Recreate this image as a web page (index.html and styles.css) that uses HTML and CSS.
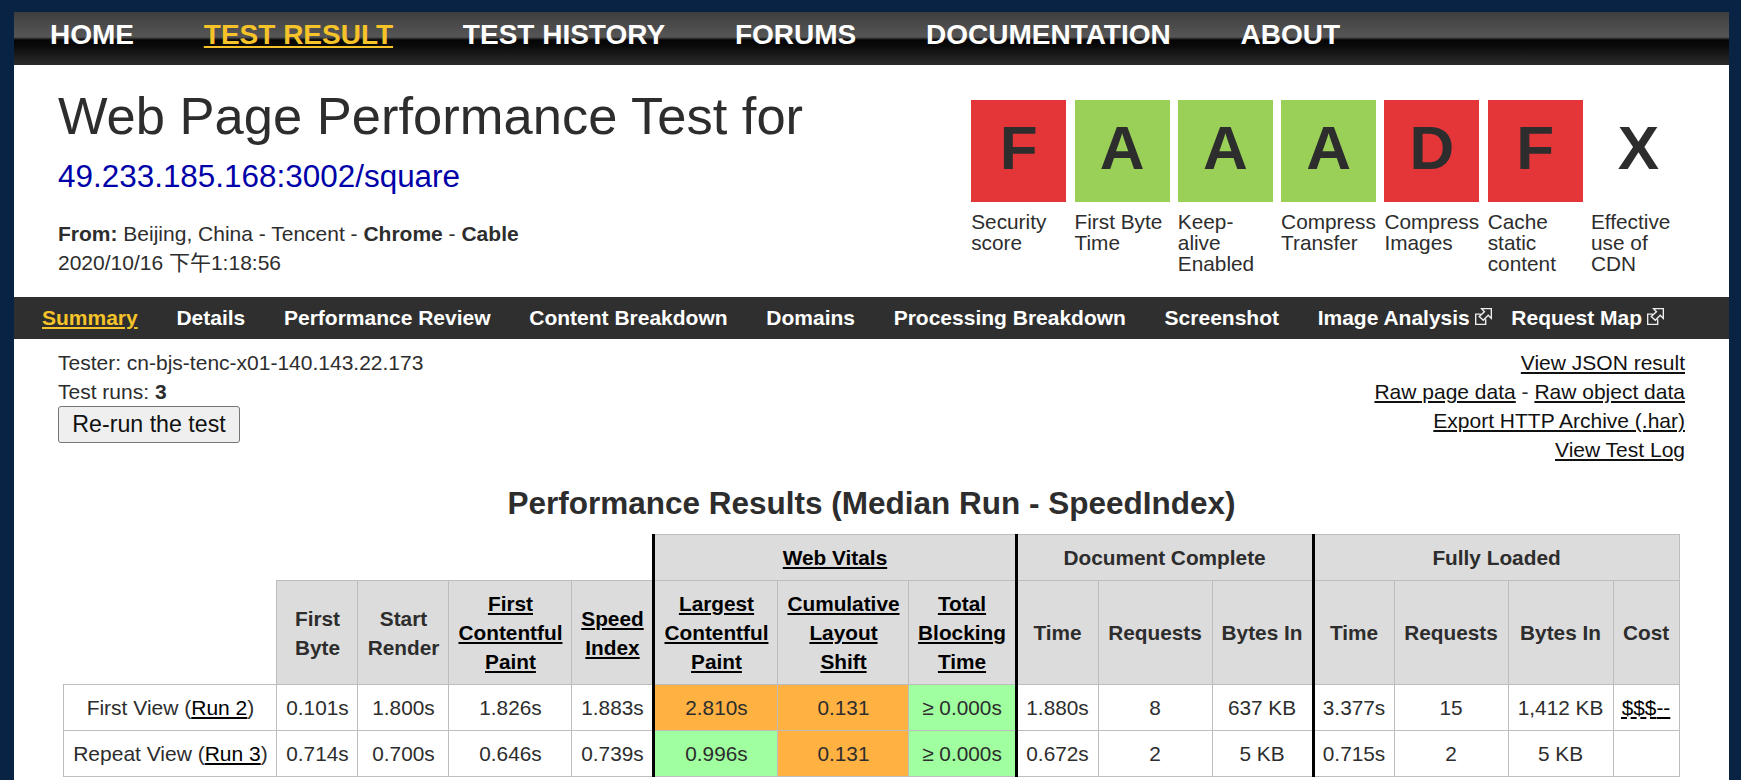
FILE: index.html
```html
<!DOCTYPE html>
<html lang="en">

<head>
    <meta charset="UTF-8">
    <meta name="viewport" content="width=device-width, initial-scale=1.0">
    <title>Web Page Performance Test</title>
    <link rel="stylesheet" href="styles.css">
</head>

<body>
    <div class="wrapper">
        <nav class="topnav">
            <a href="#">HOME</a>
            <a href="#" class="current">TEST RESULT</a>
            <a href="#">TEST HISTORY</a>
            <a href="#">FORUMS</a>
            <a href="#">DOCUMENTATION</a>
            <a href="#">ABOUT</a>
        </nav>

        <header class="header">
            <div class="header-info">
                <h1>Web Page Performance Test for</h1>
                <a href="#" class="url">49.233.185.168:3002/square</a>
                <p class="from"><b>From:</b> Beijing, China - Tencent - <b>Chrome</b> - <b>Cable</b><br>2020/10/16 下午1:18:56</p>
            </div>
            <ul class="grades">
                <li><span class="letter bad">F</span>Security score</li>
                <li><span class="letter good">A</span>First Byte Time</li>
                <li><span class="letter good">A</span>Keep-alive Enabled</li>
                <li><span class="letter good">A</span>Compress Transfer</li>
                <li><span class="letter bad">D</span>Compress Images</li>
                <li><span class="letter bad">F</span>Cache static content</li>
                <li><span class="letter">X</span>Effective use of CDN</li>
            </ul>
        </header>

        <nav class="subnav">
            <a href="#" class="current">Summary</a>
            <a href="#">Details</a>
            <a href="#">Performance Review</a>
            <a href="#">Content Breakdown</a>
            <a href="#">Domains</a>
            <a href="#">Processing Breakdown</a>
            <a href="#">Screenshot</a>
            <a href="#" class="ext">Image Analysis
                <svg class="ext-icon" viewBox="0 0 18 18"><path d="M6 6.500H.7V17.300H11.300V12M7 .7H17.300V11L14 7.700L8.800 13L4.500 9L10 4Z" /></svg></a>
            <a href="#" class="ext">Request Map
                <svg class="ext-icon" viewBox="0 0 18 18"><path d="M6 6.500H.7V17.300H11.300V12M7 .7H17.300V11L14 7.700L8.800 13L4.500 9L10 4Z" /></svg></a>
        </nav>

        <section class="meta">
            <div class="meta-left">
                <div>Tester: cn-bjs-tenc-x01-140.143.22.173</div>
                <div>Test runs: <b>3</b></div>
                <button type="button">Re-run the test</button>
            </div>
            <div class="meta-right">
                <div><a href="#">View JSON result</a></div>
                <div><a href="#">Raw page data</a> - <a href="#">Raw object data</a></div>
                <div><a href="#">Export HTTP Archive (.har)</a></div>
                <div><a href="#">View Test Log</a></div>
            </div>
        </section>

        <h2>Performance Results (Median Run - SpeedIndex)</h2>

        <table class="results">
            <colgroup>
                <col class="c-label">
                <col class="c-fb">
                <col class="c-sr">
                <col class="c-fcp">
                <col class="c-si">
                <col class="c-lcp">
                <col class="c-cls">
                <col class="c-tbt">
                <col class="c-time">
                <col class="c-req">
                <col class="c-bytes">
                <col class="c-time2">
                <col class="c-req">
                <col class="c-bytes2">
                <col class="c-cost">
            </colgroup>
            <thead>
                <tr class="group">
                    <th colspan="5" class="blank"></th>
                    <th colspan="3" class="thick"><a href="#">Web Vitals</a></th>
                    <th colspan="3" class="thick">Document Complete</th>
                    <th colspan="4" class="thick">Fully Loaded</th>
                </tr>
                <tr class="names">
                    <th class="blank"></th>
                    <th>First Byte</th>
                    <th>Start Render</th>
                    <th><a href="#">First Contentful Paint</a></th>
                    <th><a href="#">Speed Index</a></th>
                    <th class="thick"><a href="#">Largest Contentful Paint</a></th>
                    <th><a href="#">Cumulative<br>Layout<br>Shift</a></th>
                    <th><a href="#">Total Blocking Time</a></th>
                    <th class="thick">Time</th>
                    <th>Requests</th>
                    <th>Bytes In</th>
                    <th class="thick">Time</th>
                    <th>Requests</th>
                    <th>Bytes In</th>
                    <th>Cost</th>
                </tr>
            </thead>
            <tbody>
                <tr>
                    <td>First View (<a href="#">Run 2</a>)</td>
                    <td>0.101s</td>
                    <td>1.800s</td>
                    <td>1.826s</td>
                    <td>1.883s</td>
                    <td class="thick warn">2.810s</td>
                    <td class="warn">0.131</td>
                    <td class="pass">&ge; 0.000s</td>
                    <td class="thick">1.880s</td>
                    <td>8</td>
                    <td>637 KB</td>
                    <td class="thick">3.377s</td>
                    <td>15</td>
                    <td>1,412 KB</td>
                    <td><a href="#" class="cost"><span class="dashed">$$$</span><span class="solid">--</span></a></td>
                </tr>
                <tr>
                    <td>Repeat View (<a href="#">Run 3</a>)</td>
                    <td>0.714s</td>
                    <td>0.700s</td>
                    <td>0.646s</td>
                    <td>0.739s</td>
                    <td class="thick pass">0.996s</td>
                    <td class="warn">0.131</td>
                    <td class="pass">&ge; 0.000s</td>
                    <td class="thick">0.672s</td>
                    <td>2</td>
                    <td>5 KB</td>
                    <td class="thick">0.715s</td>
                    <td>2</td>
                    <td>5 KB</td>
                    <td></td>
                </tr>
            </tbody>
        </table>
    </div>
</body>

</html>
```

FILE: styles.css
```css
html, body {
    margin: 0;
    padding: 0;
    height: 100%;
    overflow: hidden;
}

body {
    background: #082344;
    color: #2d2d2d;
    font-family: "Liberation Sans", Arial, "Noto Sans CJK SC", sans-serif;
    font-size: 21px;
}

a {
    color: #111;
}

.wrapper {
    margin: 12px 12px 0 14px;
    min-height: 768px;
    background: #fff;
}

/* top bar */
.topnav {
    display: flex;
    gap: 69.800px;
    height: 53px;
    padding-left: 36px;
    box-sizing: border-box;
    background: linear-gradient(to bottom, #3e3e3e 0, #565656 25px, #050505 28px, #0a0a0a 34px, #2c2c2c 53px);
}

.topnav a {
    color: #fff;
    font-size: 28px;
    font-weight: bold;
    line-height: 46px;
    text-decoration: none;
}

.topnav a.current {
    color: #f6c328;
    text-decoration: underline;
}

/* title + grades */
.header {
    display: flex;
    justify-content: space-between;
    height: 232px;
    padding: 0 43px 0 44px;
}

h1 {
    margin: 20px 0 0;
    font-size: 52.500px;
    font-weight: normal;
    line-height: 62px;
}

.url {
    display: block;
    margin-top: 10px;
    color: #0000a8;
    font-size: 31.450px;
    line-height: 40px;
    text-decoration: none;
}

.from {
    margin: 22px 0 0;
    line-height: 29px;
}

.grades {
    display: grid;
    grid-template-columns: repeat(7, 95px);
    column-gap: 8.300px;
    align-content: start;
    margin: 35px 0 0;
    padding: 0;
    list-style: none;
    font-size: 20.800px;
    line-height: 21px;
}

.letter {
    display: block;
    height: 102px;
    margin-bottom: 9px;
    color: #2d2d2d;
    font-size: 62px;
    font-weight: bold;
    line-height: 95px;
    text-align: center;
}

.bad {
    background: #e43638;
}

.good {
    background: #9bd058;
}

/* second bar */
.subnav {
    display: flex;
    gap: 38.700px;
    align-items: center;
    height: 42px;
    padding-left: 28px;
    background: #2f2f2f;
}

.subnav a {
    color: #fff;
    font-size: 21px;
    font-weight: bold;
    text-decoration: none;
}

.subnav a.current {
    color: #f6c328;
    text-decoration: underline;
}

.subnav a.ext + a.ext {
    margin-left: -19px;
}

.ext-icon {
    width: 17px;
    height: 17px;
    margin: -6px 0 -3px -1px;
    vertical-align: 3px;
    fill: none;
    stroke: #eee;
    stroke-width: 1.500;
}

/* tester + links */
.meta {
    display: flex;
    justify-content: space-between;
    padding: 9px 44px 0;
    line-height: 29px;
}

.meta-right {
    text-align: right;
}

button {
    display: block;
    box-sizing: border-box;
    width: 182px;
    height: 37px;
    padding: 0;
    background: #efefef;
    border: 1px solid #767676;
    border-radius: 3px;
    color: #111;
    font-family: inherit;
    font-size: 23.200px;
}

h2 {
    margin: 20px 0 0;
    font-size: 31.500px;
    line-height: 38px;
    text-align: center;
}

/* results table */
.results {
    width: 1615px;
    margin: 12px auto 0;
    table-layout: fixed;
    border-collapse: collapse;
    font-size: 20.800px;
    line-height: 29px;
    text-align: center;
}

.c-label { width: 213px; }
.c-fb { width: 81px; }
.c-sr { width: 91px; }
.c-fcp { width: 123px; }
.c-si { width: 82px; }
.c-lcp { width: 124px; }
.c-cls { width: 131px; }
.c-tbt { width: 107px; }
.c-time { width: 82px; }
.c-req { width: 114px; }
.c-bytes { width: 101px; }
.c-time2 { width: 81px; }
.c-bytes2 { width: 105px; }
.c-cost { width: 66px; }

th, td {
    padding: 0;
    border: 1px solid #bdbdbd;
    overflow: hidden;
}

th {
    background: #dcdcdc;
}

th a, td a {
    color: #000;
}

td:first-child {
    font-size: 21px;
}

.group th {
    height: 45px;
}

.names th {
    height: 103px;
}

td {
    height: 45px;
}

th.blank {
    background: none;
    border-top: none;
    border-left: none;
}

.group th.blank {
    border-bottom: none;
    border-right: none;
}

.thick {
    border-left: 3px solid #000;
}

.warn {
    background: #ffb142;
}

.pass {
    background: #a0ff9f;
}

.cost {
    text-decoration: none;
}

.solid {
    text-decoration: underline;
}

.dashed {
    text-decoration: underline dashed;
}
```
